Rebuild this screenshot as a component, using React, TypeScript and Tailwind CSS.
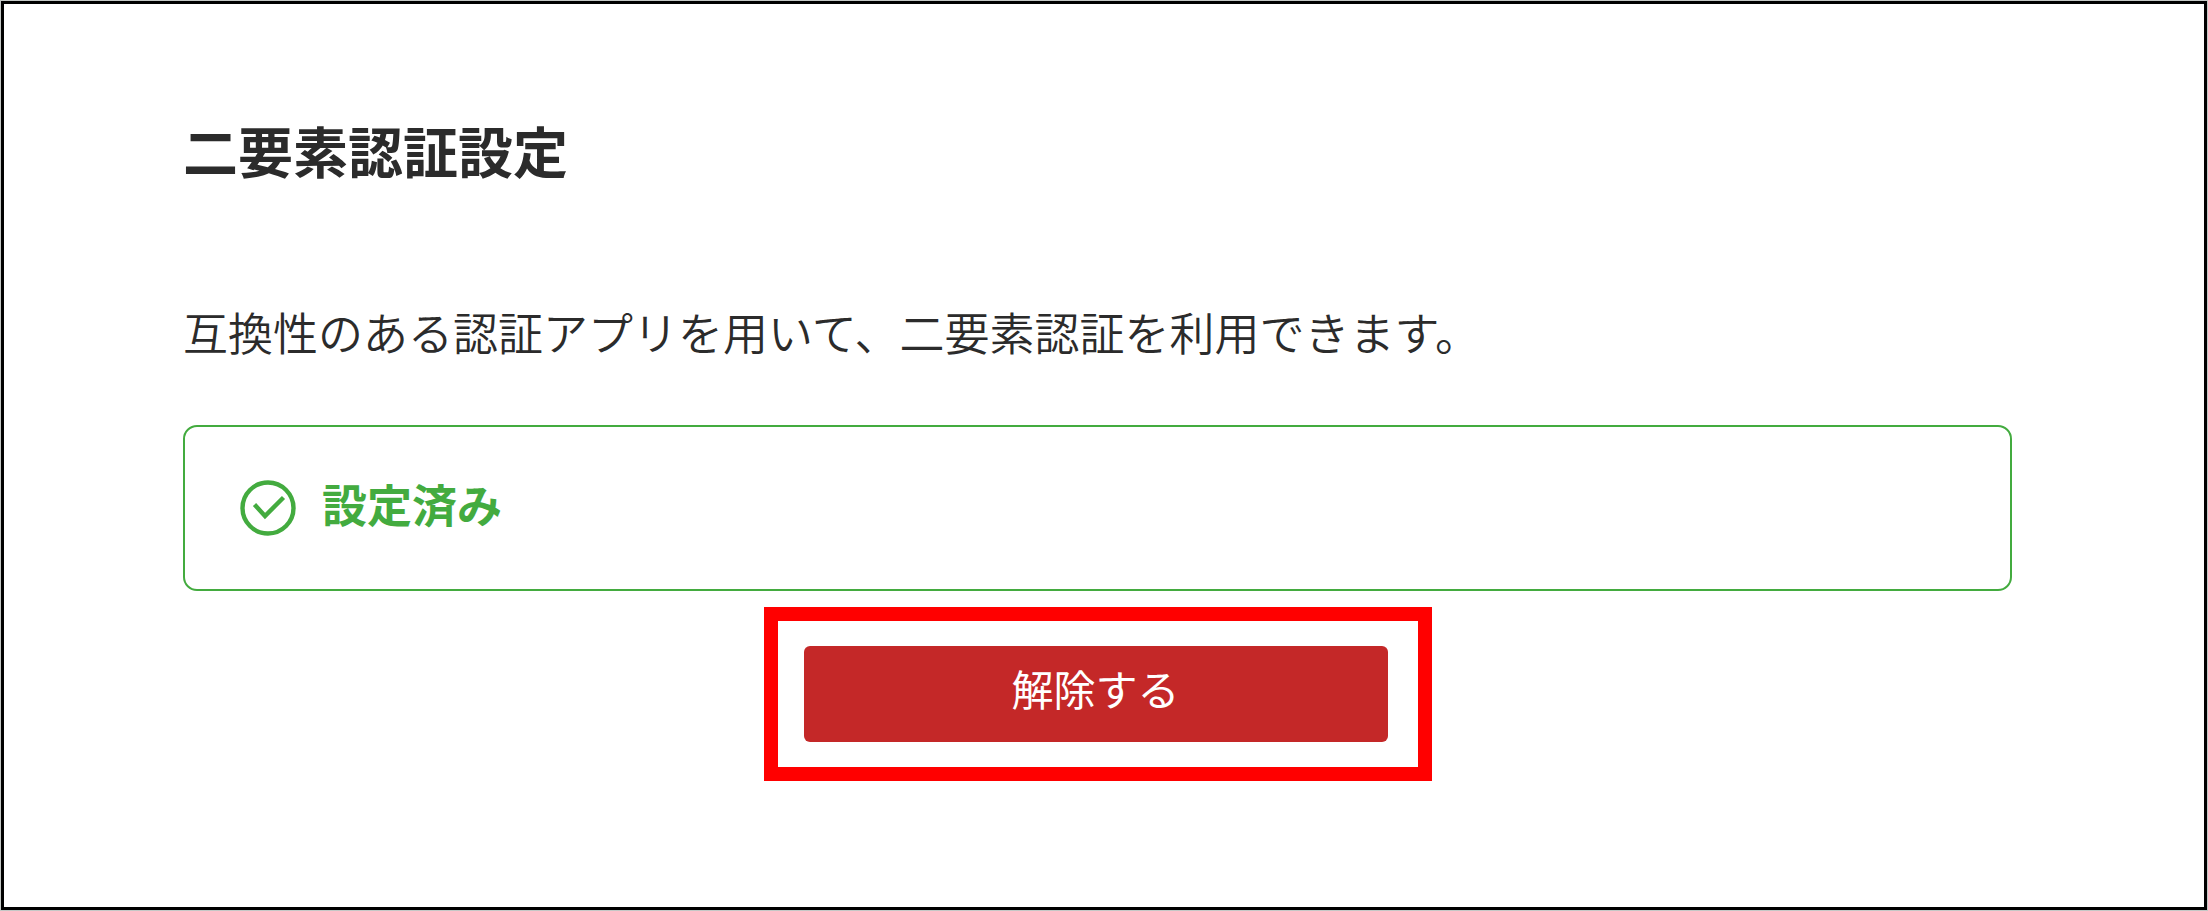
function CheckCircle() {
  return (
    <svg viewBox="0 0 56 56" className="size-14 shrink-0" fill="none" stroke="currentColor" aria-hidden="true">
      <circle cx="28" cy="28" r="25.5" strokeWidth="4.4" />
      <path d="M14.5 24.5 L25 36 L43.5 17.5" strokeWidth="4.4" />
    </svg>
  )
}

export default function App() {
  return (
    <div className="flex min-h-screen bg-[#c4c8c6] p-px font-['Noto_Sans_CJK_JP',sans-serif] text-[#2b2b2b]">
      <main className="grow border-[3px] border-black bg-white pt-[109px] pr-48 pl-[179px]">
        <h1 className="text-[55px] leading-[72px] font-bold">二要素認証設定</h1>

        <p className="mt-[115px] text-[45px] leading-[64px] font-[350]">
          互換性のある認証アプリを用いて、二要素認証を利用できます。
        </p>

        {/* Status */}
        <div className="mt-[61px] flex items-center gap-[26px] rounded-[14px] border-2 border-[#43ab3f] px-[55px] py-12 text-[#43ab3f]">
          <CheckCircle />
          <strong className="pb-2 text-[45px] leading-[58px] font-bold">設定済み</strong>
        </div>

        {/* Highlighted action */}
        <div className="mx-auto mt-4 w-[668px] border-[14px] border-[#ff0000] py-[25px] pr-[30px] pl-[26px]">
          <button
            type="button"
            className="w-full rounded-md bg-[#c42828] pt-2.5 pb-[22px] text-[42px] leading-[64px] text-white"
          >
            解除する
          </button>
        </div>
      </main>
    </div>
  )
}
